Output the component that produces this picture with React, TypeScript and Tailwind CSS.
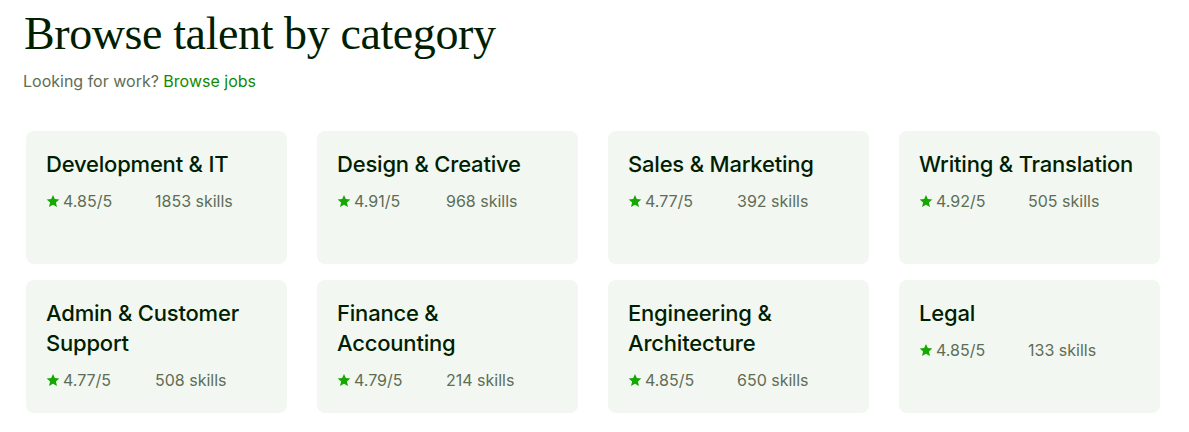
import React from "react";

const cats = [
  { t: "Development & IT", r: "4.85/5", s: "1853 skills" },
  { t: "Design & Creative", r: "4.91/5", s: "968 skills" },
  { t: "Sales & Marketing", r: "4.77/5", s: "392 skills" },
  { t: "Writing & Translation", r: "4.92/5", s: "505 skills" },
  { t: "Admin & Customer Support", r: "4.77/5", s: "508 skills" },
  { t: "Finance & Accounting", r: "4.79/5", s: "214 skills" },
  { t: "Engineering & Architecture", r: "4.85/5", s: "650 skills" },
  { t: "Legal", r: "4.85/5", s: "133 skills" },
];

function Star() {
  return (
    <svg width="14" height="14" viewBox="0 0 24 24" className="mr-[3px]">
      <path
        fill="#14a800"
        d="M12 1.5l3.1 7.2 7.8.7-5.9 5.2 1.8 7.7L12 18.3l-6.8 4 1.8-7.7L1.1 9.4l7.8-.7z"
      />
    </svg>
  );
}

export default function App() {
  return (
    <div className="bg-white w-[1189px] h-[432px] pl-[24px] pt-[7px]" style={{ fontFamily: "Inter, 'Liberation Sans', sans-serif" }}>
      <h1 className="text-[46px] leading-[54px] text-[#001e00] tracking-[-0.4px]" style={{ fontFamily: "'Liberation Serif', serif" }}>
        Browse talent by category
      </h1>
      <p className="mt-[8px] text-[16px] leading-[24px] text-[#5e6d55] -ml-[1px]">
        Looking for work? <span className="text-[#108a00]">Browse jobs</span>
      </p>
      <div className="grid grid-cols-[261px_261px_261px_261px] gap-x-[30px] gap-y-[16px] mt-[38px] ml-[2px]">
        {cats.map((c) => (
          <div key={c.t} className="bg-[#f2f7f2] rounded-[8px] h-[133px] px-[20px] pt-[18px]">
            <div className="text-[22px] leading-[30px] text-[#001e00] font-medium tracking-[-0.2px]">{c.t}</div>
            <div className="flex items-center mt-[11px] text-[16px] leading-[22px] text-[#5e6d55]">
              <Star />
              <span className="w-[92px]">{c.r}</span>
              <span>{c.s}</span>
            </div>
          </div>
        ))}
      </div>
    </div>
  );
}
